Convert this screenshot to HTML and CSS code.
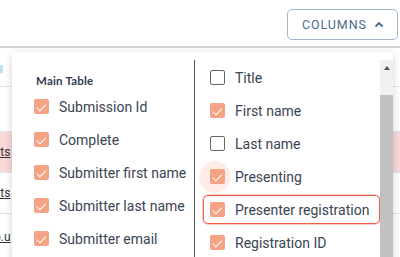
FILE: index.html
```html
<!DOCTYPE html>
<html lang="en">
<head>
    <meta charset="UTF-8">
    <title>Columns</title>
    <link rel="stylesheet" href="styles.css">
</head>
<body>
    <div class="toolbar">
        <button class="columns-btn">COLUMNS
            <svg class="caret" width="10" height="7" viewBox="0 0 10 7"><polyline points="1.5,5.5 5,2 8.5,5.5" fill="none" stroke="#4b6a8f" stroke-width="1.8"/></svg>
        </button>
    </div>

    <div class="content">
        <!-- table behind the menu -->
        <div class="table">
            <div class="row row-1"><span class="mark"></span></div>
            <div class="row row-2"></div>
            <div class="row row-3 selected"><a href="#">cts</a></div>
            <div class="row row-4"><a href="#">cts</a></div>
            <div class="row row-5"><a href="#">o.u</a></div>
        </div>

        <!-- column picker -->
        <div class="menu">
            <div class="col col-left">
                <div class="heading">Main Table</div>
                <label class="item"><span class="box on"></span>Submission Id</label>
                <label class="item"><span class="box on"></span>Complete</label>
                <label class="item"><span class="box on"></span>Submitter first name</label>
                <label class="item"><span class="box on"></span>Submitter last name</label>
                <label class="item"><span class="box on"></span>Submitter email</label>
            </div>
            <div class="col col-right">
                <label class="item"><span class="box"></span>Title</label>
                <label class="item"><span class="box on"></span>First name</label>
                <label class="item"><span class="box"></span>Last name</label>
                <label class="item hover"><span class="box on"></span>Presenting</label>
                <label class="item focused"><span class="box on"></span>Presenter registration</label>
                <label class="item"><span class="box on"></span>Registration ID</label>
            </div>
            <div class="scrollbar">
                <div class="scroll-up"><span class="arrow"></span></div>
                <div class="thumb"></div>
            </div>
        </div>
    </div>
</body>
</html>
```

FILE: styles.css
```css
:root {
    --accent: #f4a384;
    --text: #3b4452;
    --btn-color: #4b6a8f;
}

body {
    margin: 0;
    width: 400px;
    height: 257px;
    overflow: hidden;
    background: #fff;
    font-family: Roboto, "Liberation Sans", sans-serif;
    color: var(--text);
}

/* top bar with the columns button */
.toolbar {
    height: 48px;
    display: flex;
    justify-content: flex-end;
    align-items: flex-start;
    padding-top: 9px;
    box-sizing: border-box;
    border-bottom: 2px solid #d2d2d2;
}

.columns-btn {
    width: 111px;
    height: 31px;
    margin-right: 2px;
    border: 1px solid #a3b4c9;
    border-radius: 5px;
    background: #fff;
    color: var(--btn-color);
    font-family: Roboto, "Liberation Sans", sans-serif;
    font-size: 12.5px;
    letter-spacing: 0.9px;
    display: flex;
    align-items: center;
    padding: 0 0 0 14px;
    gap: 7px;
}

.caret {
    margin-top: -1px;
}

.content {
    position: relative;
    height: 209px;
    overflow: hidden;
}

/* table rows peeking out on the left */
.table {
    display: flex;
    flex-direction: column;
}

.row {
    border-bottom: 1px solid #e2e2e2;
    display: flex;
    align-items: center;
    font-size: 12px;
    position: relative;
}

.row a {
    color: #333;
    margin-left: -6px;
}

.row-1 { height: 39px; padding-top: 4px; box-sizing: border-box; }
.row-2 { height: 44px; }
.row-3 { height: 40px; }
.row-4 { height: 40px; }
.row-5 { height: 45px; border-bottom: none; }

.row.selected {
    background: #f9d9d9;
}

.mark {
    width: 3px;
    height: 8px;
    background: #bfe0f4;
}

/* dropdown */
.menu {
    position: absolute;
    top: 4px;
    left: 12px;
    right: 7px;
    height: 220px;
    background: #fff;
    box-shadow: 0 2px 8px rgba(0, 0, 0, 0.18);
    display: flex;
    padding-top: 8px;
}

.col {
    display: flex;
    flex-direction: column;
}

.col-left {
    width: 182px;
    padding-left: 22px;
    box-sizing: border-box;
}

.col-right {
    width: 186px;
    border-left: 1.5px solid #555;
    padding-left: 8px;
    padding-top: 1px;
    box-sizing: border-box;
}

.heading {
    height: 14px;
    margin: 13px 0 3px;
    display: flex;
    align-items: center;
    padding-left: 2px;
    font-family: Lato, "Liberation Sans", sans-serif;
    font-weight: bold;
    font-size: 11.5px;
    letter-spacing: 0.2px;
    color: #2e3a4e;
}

.item {
    height: 33px;
    display: flex;
    align-items: center;
    gap: 10px;
    font-size: 14px;
    white-space: nowrap;
    box-sizing: border-box;
}

.col-right .item {
    padding-left: 7px;
    margin-right: 1px;
}

.item.focused {
    border: 1px solid #ec5f46;
    box-shadow: 0 0 0 0.5px rgba(236, 95, 70, 0.6);
    border-radius: 5px;
    padding-left: 6px;
    height: 29px;
    margin: 2px 0;
}

.box {
    width: 15px;
    height: 15px;
    box-sizing: border-box;
    border: 1.5px solid #666;
    border-radius: 2px;
    background: #fff;
    position: relative;
    flex-shrink: 0;
}

.box.on {
    border: none;
    background: var(--accent);
}

.box.on::after {
    content: "";
    position: absolute;
    left: 5px;
    top: 2.5px;
    width: 4px;
    height: 7.5px;
    border: solid #fff;
    border-width: 0 1.5px 1.5px 0;
    transform: rotate(45deg);
}

.item.hover .box::before {
    content: "";
    position: absolute;
    left: -11px;
    top: -8.5px;
    width: 32px;
    height: 32px;
    border-radius: 50%;
    background: rgba(244, 163, 132, 0.2);
}

.scrollbar {
    width: 13px;
    display: flex;
    flex-direction: column;
    background: #c1c1c1;
}

.scroll-up {
    height: 35px;
    background: #f1f1f1;
    display: flex;
    justify-content: center;
    padding-top: 6px;
    box-sizing: border-box;
}

.arrow {
    width: 0;
    height: 0;
    border-left: 3.5px solid transparent;
    border-right: 3.5px solid transparent;
    border-bottom: 4px solid #505050;
}

.thumb {
    flex: 1;
    background: #c1c1c1;
}
```
